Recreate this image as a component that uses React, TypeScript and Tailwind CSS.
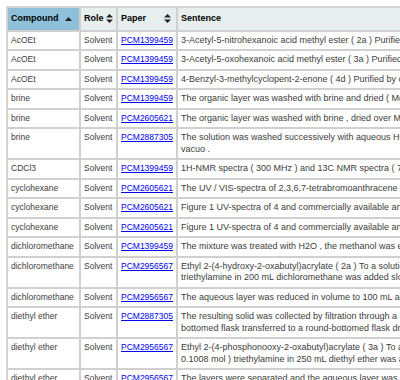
const rows: [string, string, string[]][] = [
  ['AcOEt', 'PCM1399459', ['3-Acetyl-5-nitrohexanoic acid methyl ester ( 2a ) Purified by column chromatography on silica gel ( AcOEt / hexane ) .']],
  ['AcOEt', 'PCM1399459', ['3-Acetyl-5-oxohexanoic acid methyl ester ( 3a ) Purified by column chromatography on silica gel ( AcOEt / hexane ) .']],
  ['AcOEt', 'PCM1399459', ['4-Benzyl-3-methylcyclopent-2-enone ( 4d ) Purified by column chromatography on silica gel ( AcOEt / hexane ) .']],
  ['brine', 'PCM1399459', ['The organic layer was washed with brine and dried ( MgSO4 ) and the solvent was removed under reduced pressure .']],
  ['brine', 'PCM2605621', ['The organic layer was washed with brine , dried over MgSO4 and the solvent was evaporated .']],
  ['brine', 'PCM2887305', ['The solution was washed successively with aqueous HCl , water and brine , dried over sodium sulfate and concentrated in', 'vacuo .']],
  ['CDCl3', 'PCM1399459', ['1H-NMR spectra ( 300 MHz ) and 13C NMR spectra ( 75 MHz ) were recorded in CDCl3 .']],
  ['cyclohexane', 'PCM2605621', ['The UV / VIS-spectra of 2,3,6,7-tetrabromoanthracene and anthracene were recorded in cyclohexane .']],
  ['cyclohexane', 'PCM2605621', ['Figure 1 UV-spectra of 4 and commercially available anthracene in cyclohexane .']],
  ['cyclohexane', 'PCM2605621', ['Figure 1 UV-spectra of 4 and commercially available anthracene in cyclohexane .']],
  ['dichloromethane', 'PCM1399459', ['The mixture was treated with H2O , the methanol was evaporated and the residue extracted with dichloromethane .']],
  ['dichloromethane', 'PCM2956567', ['Ethyl 2-(4-hydroxy-2-oxabutyl)acrylate ( 2a ) To a solution of ethylene glycol and 12.2 g ( 0.1208 mol )', 'triethylamine in 200 mL dichloromethane was added slowly a solution of ethyl 2-(bromomethyl)acrylate .']],
  ['dichloromethane', 'PCM2956567', ['The aqueous layer was reduced in volume to 100 mL and extracted with dichloromethane .']],
  ['diethyl ether', 'PCM2887305', ['The resulting solid was collected by filtration through a 70 mL medium porosity fritted funnel into a 250 mL round-', 'bottomed flask transferred to a round-bottomed flask dried with diethyl ether .']],
  ['diethyl ether', 'PCM2956567', ['Ethyl 2-(4-phosphonooxy-2-oxabutyl)acrylate ( 3a ) To a solution of 2a and 10.2 g (', '0.1008 mol ) triethylamine in 250 mL diethyl ether was added phosphorus oxychloride .']],
  ['diethyl ether', 'PCM2956567', ['The layers were separated and the aqueous layer was extracted with diethyl ether .']],
]

function SortBoth() {
  return (
    <svg width="7" height="9" viewBox="0 0 7 9" className="inline-block">
      <path d="M3.5 0 L7 3.5 L0 3.5 Z M0 5.5 L7 5.5 L3.5 9 Z" fill="#222" />
    </svg>
  )
}

function SortUp() {
  return (
    <svg width="7" height="4" viewBox="0 0 7 4" className="inline-block">
      <path d="M3.5 0 L7 4 L0 4 Z" fill="#222" />
    </svg>
  )
}

export default function App() {
  return (
    <div className="p-[6px] bg-white font-['Liberation_Sans',Arial,sans-serif] text-[8.5px] leading-[11.5px]">
      <table className="border-separate border-spacing-0 w-[900px] border border-[#d6d6d6]">
        <thead>
          <tr className="text-black font-bold text-[9px] text-left">
            <th className="w-[73px] px-[3px] py-[5px] border border-[#d0d0d0] bg-[#8fc0da]">
              <div className="flex items-center justify-between pr-[4px]">
                <span>Compound</span>
                <SortUp />
              </div>
            </th>
            <th className="w-[37px] px-[3px] py-[5px] border border-[#d0d0d0] bg-[#e6eeee]">
              <div className="flex items-center justify-between">
                <span>Role</span>
                <SortBoth />
              </div>
            </th>
            <th className="w-[59px] px-[3px] py-[5px] border border-[#d0d0d0] bg-[#e6eeee]">
              <div className="flex items-center justify-between pr-[2px]">
                <span>Paper</span>
                <SortBoth />
              </div>
            </th>
            <th className="px-[3px] py-[5px] border border-[#d0d0d0] bg-[#e6eeee]">
              <div className="flex items-center justify-between pr-[4px]">
                <span>Sentence</span>
                <SortBoth />
              </div>
            </th>
          </tr>
        </thead>
        <tbody className="text-[#3d3d3d]">
          {rows.map(([compound, paper, lines], i) => (
            <tr key={i} className="align-top">
              <td className="px-[3px] py-[3px] border border-[#d0d0d0] whitespace-nowrap">{compound}</td>
              <td className="px-[3px] py-[3px] border border-[#d0d0d0]">Solvent</td>
              <td className="px-[3px] py-[3px] border border-[#d0d0d0]">
                <a href="#" className="text-[#0000ee] underline">{paper}</a>
              </td>
              <td className="px-[3px] py-[3px] border border-[#d0d0d0] whitespace-nowrap text-[9px]">
                {lines.map((l, j) => (
                  <div key={j}>{l}</div>
                ))}
              </td>
            </tr>
          ))}
        </tbody>
      </table>
    </div>
  )
}
